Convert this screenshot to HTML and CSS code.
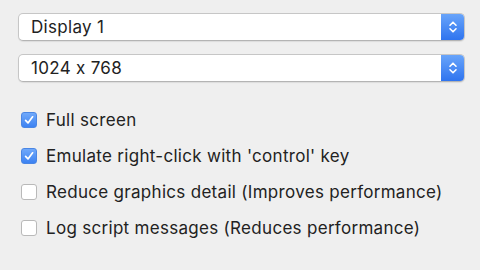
FILE: index.html
```html
<!DOCTYPE html>
<html>
<head>
  <link rel="stylesheet" href="styles.css">
</head>
<body>
  <div class="panel">
    <div class="select">
      <span class="select-label">Display 1</span>
      <span class="stepper">
        <svg width="10" height="16" viewBox="0 0 10 16">
          <path d="M2 6.2 L5 3.2 L8 6.2 M2 9.8 L5 12.8 L8 9.8" fill="none" stroke="#fff" stroke-width="1.6" stroke-linecap="round" stroke-linejoin="round"/>
        </svg>
      </span>
    </div>
    <div class="select">
      <span class="select-label">1024 x 768</span>
      <span class="stepper">
        <svg width="10" height="16" viewBox="0 0 10 16">
          <path d="M2 6.2 L5 3.2 L8 6.2 M2 9.8 L5 12.8 L8 9.8" fill="none" stroke="#fff" stroke-width="1.6" stroke-linecap="round" stroke-linejoin="round"/>
        </svg>
      </span>
    </div>

    <ul class="options">
      <li class="option">
        <span class="box checked">
          <svg width="12" height="12" viewBox="0 0 12 12"><path d="M2.6 6.4 L5 8.9 L9.6 2.8" fill="none" stroke="#fff" stroke-width="1.7" stroke-linecap="round" stroke-linejoin="round"/></svg>
        </span>
        Full screen
      </li>
      <li class="option">
        <span class="box checked">
          <svg width="12" height="12" viewBox="0 0 12 12"><path d="M2.6 6.4 L5 8.9 L9.6 2.8" fill="none" stroke="#fff" stroke-width="1.7" stroke-linecap="round" stroke-linejoin="round"/></svg>
        </span>
        Emulate right-click with 'control' key
      </li>
      <li class="option">
        <span class="box"></span>
        Reduce graphics detail (Improves performance)
      </li>
      <li class="option">
        <span class="box"></span>
        Log script messages (Reduces performance)
      </li>
    </ul>
  </div>
</body>
</html>
```

FILE: styles.css
```css
:root {
  --color-bg: #efefef;
  --color-text: #222;
  --color-blue: #3a82f6;
  --select-border: #c6c6c6;
}

body, html {
  margin: 0;
  padding: 0;
  width: 100%;
  height: 100%;
  background: var(--color-bg);
  font-family: Inter, "Liberation Sans", sans-serif;
  font-feature-settings: "calt" 0;
  -webkit-font-smoothing: antialiased;
  color: var(--color-text);
  overflow: hidden;
}

.panel {
  padding: 13px 15px 0 18px;
  display: flex;
  flex-direction: column;
}

.select {
  height: 28px;
  box-sizing: border-box;
  display: flex;
  align-items: stretch;
  background: #fff;
  border: 1px solid var(--select-border);
  border-bottom-color: #b4b4b4;
  border-radius: 5px;
  box-shadow: 0 1px 1px rgba(0, 0, 0, 0.08);
  margin-bottom: 13px;
  overflow: hidden;
}

.select-label {
  flex: 1;
  padding-left: 12px;
  font-size: 17px;
  letter-spacing: 0.3px;
  line-height: 26px;
}

.stepper {
  width: 23px;
  display: flex;
  align-items: center;
  justify-content: center;
  background: linear-gradient(#68a4fa, #2f74ef);
}

.options {
  list-style: none;
  margin: 14px 0 0 3px;
  padding: 0;
  display: flex;
  flex-direction: column;
  gap: 14px;
}

.option {
  display: flex;
  align-items: center;
  gap: 9px;
  height: 22px;
  font-size: 17px;
  letter-spacing: 0.3px;
}

.box {
  width: 16px;
  height: 16px;
  box-sizing: border-box;
  border-radius: 3px;
  background: #fff;
  border: 1px solid #b9b9b9;
  display: flex;
  align-items: center;
  justify-content: center;
}

.box.checked {
  background: linear-gradient(#70a9fa, #3c82f2);
  border-color: #4a86e4;
}
```
